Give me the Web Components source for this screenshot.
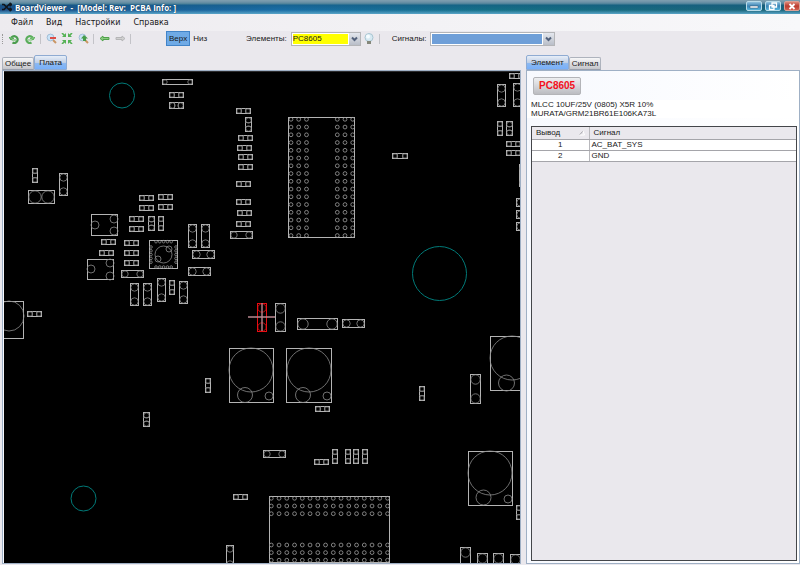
<!DOCTYPE html>
<html lang="ru">
<head>
<meta charset="utf-8">
<title>BoardViewer</title>
<style>
html,body{height:100%;margin:0}
body{font:8px/10px "Liberation Sans",Arial,sans-serif;color:#181818;background:#eae8ed;overflow:hidden}
</style>
</head>
<body>
<board-viewer></board-viewer>
<script>
const define = (name, html, setup) => customElements.define(name, class extends HTMLElement {
  constructor() {
    super();
    this.attachShadow({mode: 'open'});
  }
  connectedCallback() {
    if (this.shadowRoot.childNodes.length) return;
    this.shadowRoot.innerHTML = typeof html === 'function' ? html(this) : html;
    if (setup) setup(this);
  }
});

define('title-bar', `
<style>
:host{display:flex;align-items:center;gap:3px;height:14px;padding:0 0 0 2px;box-sizing:border-box;color:#fff;
 background:linear-gradient(#7fa0b0 0,#6f93a8 2px,#4b8098 4px,#14588080 5px,#0f6a9000 10px,#5aa5c8 14px),linear-gradient(90deg,#1d4f88,#1a6ea6 35%,#157086 62%,#1b6378)}
h1{flex:1;margin:0;font:bold 8px/13px "Open Sans","Noto Sans",sans-serif;white-space:pre;text-shadow:0 0 1px #002244}
button{flex:none;width:16px;height:10px;margin:0 0 2px;padding:0;border:1px solid #b9dbe8;border-radius:2px;background:linear-gradient(#8fc0dc,#3a83b4 50%,#54b5dd);display:flex;justify-content:center;align-items:center}
button.close{border-color:#dca095;background:linear-gradient(#dd8878,#bb3c30 50%,#d2604f)}
svg{display:block}
</style>
<svg width="10" height="10" viewBox="0 0 10 10" fill="none" stroke="#10161c" stroke-width="1.7" aria-hidden="true"><path d="M0 2.5h2l5 5h2M0 7.5h2l5-5h2M7.5 1l2 1.5-2 1.5M7.5 6l2 1.5-2 1.5"/></svg>
<h1>BoardViewer  -  [Model: Rev:  PCBA Info: ]</h1>
<button aria-label="Свернуть"><svg width="10" height="6"><path d="M1 3h8v2H1z" fill="#fff" stroke="#35556c" stroke-width=".5"/></svg></button>
<button aria-label="Восстановить"><svg width="10" height="8" fill="none" stroke="#fff" stroke-width="1.3"><path d="M4 1h4.500v4H4zM1.500 3.500H6v4H1.500z"/></svg></button>
<button class="close" aria-label="Закрыть"><svg width="8" height="7" stroke="#fff" stroke-width="1.8"><path d="M1.5 1l5 5M6.500 1l-5 5"/></svg></button>`);

define('menu-bar', `
<style>
:host{display:flex;gap:13px;height:17px;padding-left:11px;align-items:center;background:linear-gradient(90deg,#edebef,#f8f8fa)}
button{border:0;background:none;padding:0;color:inherit;font:8px/12px "DejaVu Sans",sans-serif}
</style>
<button>Файл</button><button>Вид</button><button>Настройки</button><button>Справка</button>`);

define('combo-box', host => `
<style>
:host{display:flex;align-items:center;gap:4px}
.box{display:grid;height:14px;width:var(--w,70px);box-sizing:border-box;border:1px solid #b4b5b8;background:#fff}
select{grid-area:1/1;appearance:none;min-width:0;width:100%;height:12px;box-sizing:border-box;margin:0;padding:0;border:1px solid #fff;border-right:12px solid #fff;border-radius:0;font:inherit;color:inherit;background:var(--fill)}
svg{grid-area:1/1;justify-self:end;width:11px;height:12px;background:linear-gradient(#e4e7ee,#b9bec8);pointer-events:none}
</style>
<label for="s">${host.getAttribute('label')}</label>
<span class="box"><select id="s"><option>${host.getAttribute('value') || ''}</option></select>
<svg viewBox="0 0 11 12" fill="none" stroke="#53617b" stroke-width="2"><path d="M3 4.500l2.500 2.500L8 4.500"/></svg></span>`);

define('tool-bar', `
<style>
:host{display:flex;align-items:center;height:15px;padding:0 2px}
button{border:0;background:none;padding:0;margin:0;color:inherit;font:inherit;flex:none}
button.i{width:16px;height:14px;display:grid;place-items:center}
i{width:1px;height:10px;background:#c3c3c8;margin:0 2px}
i.grip{width:0;background:none;border-left:1px dotted #999;margin:0 3px 0 0}
.side{padding:1px 2px;height:15px}
.on{background:#6faae6;border:1px solid #4284c8;margin:0 1px 0 33px}
.a{margin-left:37px;--w:70px;--fill:#ff0}
.b{margin-left:10px;--w:125px;--fill:#6f9fd8}
</style>
<i class="grip"></i>
<button class="i" aria-label="Повернуть влево"><svg width="10" height="10" fill="none" stroke="#4b9d4e" stroke-width="2.200"><path d="M3.500 8.500A3.400 3.400 0 1 0 2 4.500"/><path d="M0 3l2 3 3-2" fill="#6fbe6b" stroke-width="1"/><path d="M3 6l4 0" stroke="#86c981" stroke-width="1.500"/></svg></button>
<button class="i" aria-label="Повернуть вправо"><svg width="10" height="10" fill="none" stroke="#5aad5b" stroke-width="2.200"><path d="M6.500 8.500A3.400 3.400 0 1 1 8 4.500"/><path d="M10 3L8 6 5 4" fill="#7cc878" stroke-width="1"/><path d="M3 6h4" stroke="#93d08d" stroke-width="1.500"/></svg></button>
<i></i>
<button class="i" aria-label="Уменьшить"><svg width="11" height="11"><path d="M6 6l4 4" stroke="#ca9665" stroke-width="2"/><circle cx="4.500" cy="4.500" r="3.400" fill="#c9e3f8" stroke="#a3bfd7"/><path d="M4 5h6" stroke="#dc4d47" stroke-width="2"/></svg></button>
<button class="i" aria-label="Показать всё"><svg width="12" height="11" fill="#55b255" stroke="#55b255"><path d="M1 0l3 3M11 0L8 3M1 11l3-3M11 11L8 8" stroke-width="1.600"/><path d="M1 4h4V0zM7 0v4h4zM1 7h4v4zM7 7h4L7 11z" stroke="none"/></svg></button>
<button class="i" aria-label="Увеличить"><svg width="11" height="11"><path d="M6 6l4 4" stroke="#ca9665" stroke-width="2"/><circle cx="4.500" cy="4.500" r="3.400" fill="#c9e3f8" stroke="#a3bfd7"/><path d="M6 2l4 3.500H8V8H5V5.500H3z" fill="#479d4b"/></svg></button>
<i></i>
<button class="i" aria-label="Назад"><svg width="11" height="7"><path d="M1 3.500L4 1v1.500h6v2H4V6z" fill="#8bcb80" stroke="#50a24c"/></svg></button>
<button class="i" aria-label="Вперёд"><svg width="11" height="7"><path d="M10 3.500L7 1v1.500H1v2h6V6z" fill="#d0d0d0" stroke="#b5b5b7"/></svg></button>
<i></i>
<button class="side on">Верх</button><button class="side">Низ</button>
<combo-box class="a" label="Элементы:" value="PC8605"></combo-box>
<button class="i" aria-label="Подсветка"><svg width="10" height="12"><circle cx="5" cy="4.500" r="4" fill="#d7eaf3" stroke="#a9c5d1"/><circle cx="4" cy="3.500" r="2" fill="#f5fcff"/><path d="M3 8h4v3H3z" fill="#85877a"/></svg></button>
<i></i>
<combo-box class="b" label="Сигналы:"></combo-box>`);

define('tab-pane', host => {
  const names = host.getAttribute('tabs').split(',');
  const on = host.getAttribute('selected');
  return `
<style>
:host{display:flex;flex-direction:column;min-width:0;min-height:0}
[role=tablist]{display:flex;align-items:flex-end;height:15px;flex:none}
button{height:13px;margin:0;padding:0 2px;border:1px solid #aeb3bd;border-bottom-color:#999fac;border-radius:2px 2px 0 0;font:inherit;line-height:11px;color:inherit;background:linear-gradient(#f7f7f8,#dedee2 50%,#c4c5ca)}
button[aria-selected=true]{height:15px;padding:0 4px;line-height:12px;border-color:#8fabd2;background:linear-gradient(#e7eef8,#c0cfe5 50%,#8db9f0 55%,#78b0fa)}
.body{flex:1;min-height:0;display:flex;flex-direction:column;border:1px solid #9fb0c5;background:linear-gradient(90deg,#f7f9fe,#fff)}
</style>
<div role="tablist">${names.map(n => `<button role="tab" aria-selected="${n === on}">${n}</button>`).join('')}</div>
<div class="body" role="tabpanel"><slot></slot></div>`;
});

/* Two-terminal parts: x, y, width, height in board space. */
const PARTS = [
 [162,79,30,5],[169,92,14,5],[169,102,14,6],[236,108,14,5],[245,117,6,14],[238,135,14,5],[237,145,14,5],[238,154,14,5],
 [238,164,14,5],[236,181,14,5],[236,199,14,5],[237,210,14,5],[236,221,14,5],[230,231,22,7],[32,168,5,14],[59,173,8,22],
 [28,190,26,13],[139,195,14,5],[158,194,14,5],[139,205,14,5],[158,204,14,5],[129,216,14,5],[129,226,14,5],[148,216,6,14],
 [158,216,5,14],[101,239,14,5],[124,240,14,5],[99,250,14,5],[124,250,14,5],[124,260,14,5],[121,270,22,7],[188,224,8,23],
 [201,224,8,23],[192,250,22,8],[188,267,22,8],[130,283,8,22],[143,283,8,22],[157,278,8,23],[169,280,5,14],[179,281,8,22],
 [27,311,14,5],[392,153,15,5],[275,303,10,28],[297,318,40,11],[342,319,22,8],[205,378,5,14],[315,406,14,5],
 [509,73,14,5],[497,84,8,22],[513,83,8,23],[497,121,5,14],[506,121,6,14],[506,141,14,5],[506,150,14,5],[519,164,8,22],
 [516,198,22,8],[516,210,22,8],[516,222,22,8],[470,374,10,29],[419,386,5,14],[516,505,5,14],[460,547,10,28],[477,553,10,20],
 [493,553,10,20],[510,554,10,20],[263,450,22,7],[314,459,14,5],[332,449,5,14],[345,449,5,14],[353,449,5,14],[362,449,5,14],
 [233,494,14,5],[226,545,7,22],[143,412,6,14]];
/* Outlines with their pads: [x,y,w,h], then [cx,cy,r] for each pad. */
const PACKAGES = [
 [[91,214,26,21],[95,225,4],[114,219,4],[114,231,4]],
 [[87,259,26,20],[91,269,4],[110,263,4],[110,276,4]],
 [[149,240,28,28],[163.5,254.5,8.5],[169,249,3],[158,259,3]],
 [[-22,301,45,37],[9,316,15]],
 [[229,348,44,54],[251,370,22],[245,395,7.5],[269,396,4]],
 [[286,348,45,54],[309,370,22],[303,395,7.5],[327,396,4]],
 [[490,336,45,54],[512,358,22],[506.5,383,8]],
 [[468,451,44,54],[490,473,22],[483.5,497.5,7.5],[508,499,4]]];
const rect = (x,y,w,h) => `<rect x="${x+.5}" y="${y+.5}" width="${w}" height="${h}"/>`;
const pad = (x,y,r) => `<circle cx="${x}" cy="${y}" r="${r}"/>`;
function part([x,y,w,h]) {
  const wide = w > h, s = Math.min(w,h), l = Math.max(w,h), r = s/2 - .3, c = s/2 + .5;
  const at = d => wide ? pad(x+d+.5, y+c, r) : pad(x+c, y+d+.5, r);
  let out = rect(x,y,w,h) + `<g class="p">${at(s/2)}${at(l-s/2)}`;
  if (l < 16) out += wide ? `<path d="M${x+5.5} ${y}v${h}M${x+w-4.5} ${y}v${h}"/>` : `<path d="M${x} ${y+5.5}h${w}M${x} ${y+h-4.5}h${w}"/>`;
  return out + '</g>';
}
function grid(xs, ys) { return xs.map(x => ys.map(y => pad(x,y,1.9)).join('')).join(''); }
const run = (a, step, n) => Array.from({length:n}, (_,i) => a + i*step);

define('board-canvas', () => {
  let s = PARTS.map(part).join('');
  for (const [box, ...pads] of PACKAGES)
    s += rect(...box) + '<g class="p">' + pads.map(p => pad(...p)).join('') + '</g>';
  s += rect(288,117,66,120) + rect(269,496,120,66);
  s += '<g class="b">' + grid([291,298.7,306.5,337.3,345,352.7], run(119.3,7.75,16))
     + grid(run(271.3,7.75,16), [498.3,506,513.7,545,552.6,560.2]) + '</g>';
  s += '<g class="p">' + run(156,3.8,5).map(x => pad(x,241.7,1.3)+pad(x,267,1.3)).join('')
     + run(247,3.8,5).map(y => pad(151,y,1.3)+pad(176,y,1.3)).join('') + '</g>';
  return `
<style>
:host{display:block;flex:1;min-height:0;margin-left:1px;background:#000;overflow:hidden;border-top:1px solid #2c2c2e;box-sizing:border-box}
svg{display:block;width:100%;height:100%}
g{fill:none;stroke:#b4b4b4;stroke-width:1}
.p{stroke:#8c8c8c;stroke-width:.8}
.b{stroke:#a0a0a0;stroke-width:.8}
.hole{stroke:#007a78}
.sel,.sel .p{stroke:#e80c12}
.cross{stroke:#b98890;stroke-width:1.4}
</style>
<svg role="img" aria-label="Плата"><g transform="translate(-4 -72)">${s}
<g class="hole">${pad(122,95.5,12.5)}${pad(439.5,273.5,27)}${pad(83.5,498.5,12.5)}</g>
<g class="sel">${part([257,303,9,28])}</g>
<path class="cross" d="M248 317h27M262 303v28"/></g></svg>`;
});

define('pin-table', `
<style>
:host{display:block;flex:1;min-height:0;border:1px solid #44464a;background:#eae8ed;margin:8px 2px 2px 4px}
table{width:100%;border-collapse:collapse;table-layout:fixed;line-height:10px}
th,td{height:10px;padding:0 2px;font-weight:normal;text-align:left;border-bottom:1px solid #a5a5aa;background:#fff}
th{height:12px;padding:0 4px;background:#eae8ed}
th+th,td+td{border-left:1px solid #b8b8bc}
td:first-child{text-align:center}
.h{display:flex;justify-content:space-between;align-items:center}
</style>
<table><colgroup><col style="width:57px"><col></colgroup>
<thead><tr><th><span class="h">Вывод<svg width="6" height="6" fill="none" stroke="#a3a3a8" aria-hidden="true"><path d="M.5 5L4 1"/><path d="M4 1l1.500 4h-5" stroke="#fff"/></svg></span></th><th>Сигнал</th></tr></thead>
<tbody><tr><td>1</td><td>AC_BAT_SYS</td></tr><tr><td>2</td><td>GND</td></tr></tbody></table>`);

define('part-info', `
<style>
:host{display:flex;flex-direction:column;flex:1;min-height:0}
button{align-self:flex-start;margin:6px 0 5px 6px;padding:0 5px;height:18px;border:1px solid #b3b4b8;border-radius:2px;background:linear-gradient(#eeeff1,#d5d6da 50%,#bbbcc1);color:#f4101c;font:bold 10px/16px "Liberation Sans",sans-serif}
p{margin:0;padding-left:4px;line-height:9px;background:#fff}
</style>
<button>PC8605</button>
<p>MLCC 10UF/25V (0805) X5R 10%<br>MURATA/GRM21BR61E106KA73L</p>
<pin-table></pin-table>`);

define('board-viewer', `
<style>
:host{display:flex;flex-direction:column;height:100vh}
main{flex:1;min-height:0;display:grid;grid-template-columns:minmax(0,519fr) minmax(0,274fr);gap:5px;padding:9px 0 1px 2px}
</style>
<title-bar></title-bar><menu-bar></menu-bar><tool-bar></tool-bar>
<main>
<tab-pane tabs="Общее,Плата" selected="Плата"><board-canvas></board-canvas></tab-pane>
<tab-pane tabs="Элемент,Сигнал" selected="Элемент"><part-info></part-info></tab-pane>
</main>`);
</script>
</body>
</html>
